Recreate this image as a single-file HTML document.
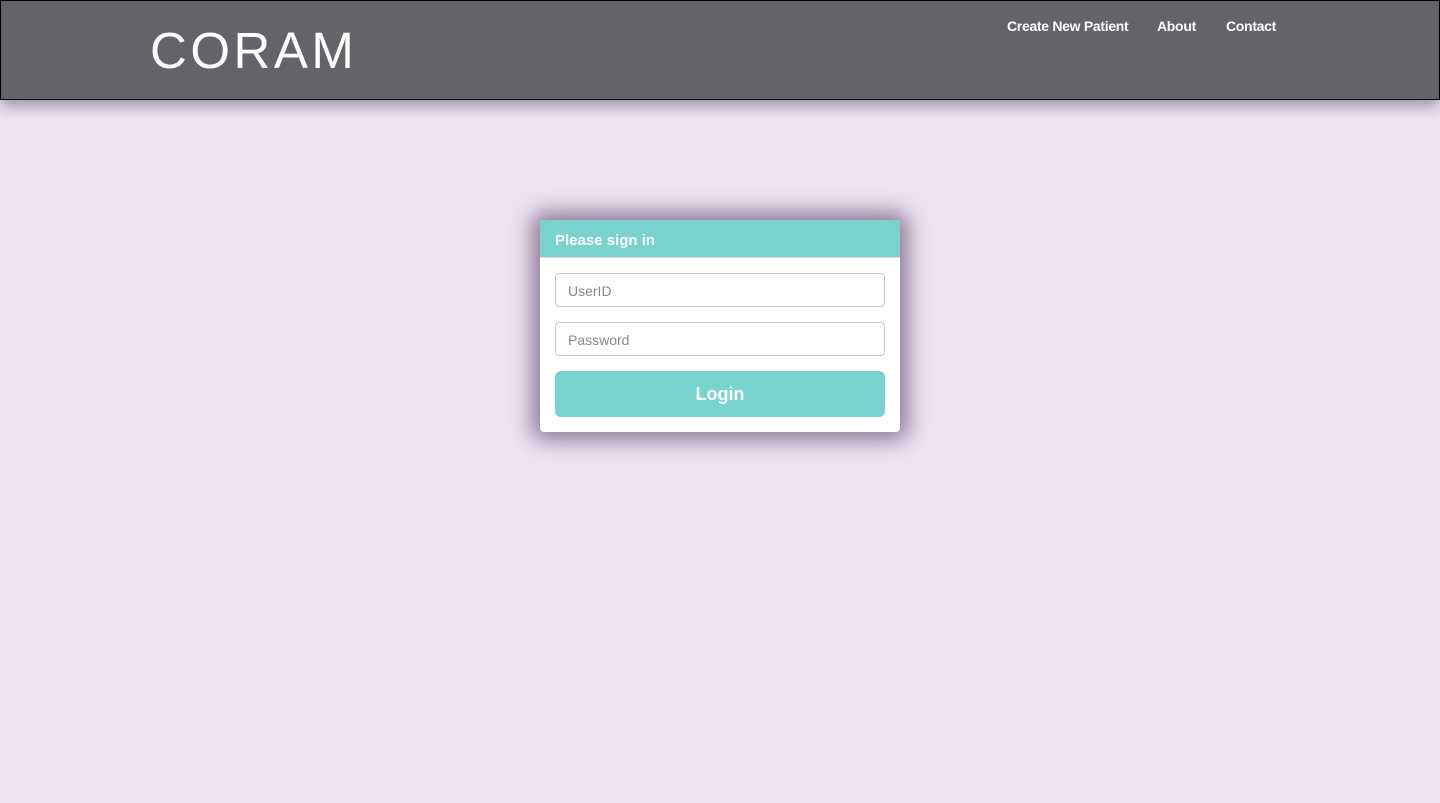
<!DOCTYPE html>
<html><head><style>
*{box-sizing:border-box}
body{margin:0;width:1440px;height:803px;background:#eee3f4;font-family:"Liberation Sans",sans-serif;overflow:hidden;position:relative}
.hdr{position:absolute;left:0;top:0;width:1440px;height:100px;background:#636368;border:1px solid #000;box-shadow:0 6px 14px rgba(60,50,70,.45)}
.logo{position:absolute;left:149px;top:24px;color:#fff;font-size:51px;letter-spacing:3.5px;line-height:52px}
.nav{position:absolute;top:17px;color:#fff;font-size:14px;font-weight:bold;letter-spacing:-0.3px}
.card{position:absolute;left:540px;top:220px;width:360px;height:212px;background:#fff;border-radius:4px;box-shadow:0 0 22px 8px rgba(70,50,80,.6);overflow:hidden}
.ch{height:38px;background:#78d3ce;color:#fff;font-weight:bold;font-size:15px;padding:12px 15px;border-bottom:1px solid #ddd}
.in{position:absolute;left:15px;width:330px;height:34px;border:1px solid #ccc;border-radius:4px;color:#888;font-size:14px;padding:9px 12px}
.btn{position:absolute;left:15px;top:151px;width:330px;height:46px;background:#78d3ce;border-radius:6px;color:#fff;font-size:18px;font-weight:bold;text-align:center;line-height:46px}
</style></head><body>
<div class="hdr">
<div class="logo">CORAM</div>
<div class="nav" style="left:1006px">Create New Patient</div>
<div class="nav" style="left:1156px">About</div>
<div class="nav" style="left:1225px">Contact</div>
</div>
<div class="card">
<div class="ch">Please sign in</div>
<div class="in" style="top:53px">UserID</div>
<div class="in" style="top:102px">Password</div>
<div class="btn">Login</div>
</div>
</body></html>
